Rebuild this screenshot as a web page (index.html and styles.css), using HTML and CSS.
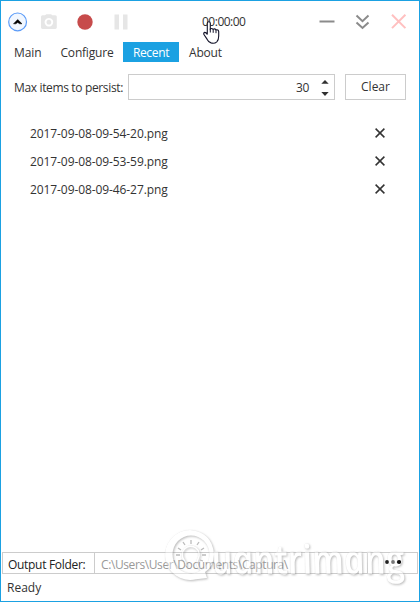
FILE: index.html
```html
<!DOCTYPE html>
<html lang="en">
<head>
<meta charset="utf-8">
<title>Captura</title>
<link rel="stylesheet" href="styles.css">
</head>
<body>
<div class="window">
  <header class="toolbar">
    <svg class="tools" width="140" height="40" viewBox="0 0 140 40">
      <circle cx="16.6" cy="19.9" r="8.9" fill="#f1f7ff" stroke="#5c9cf8" stroke-width="1.2"/>
      <path d="M12.5 21.8 16.7 17.5 21 21.8H18.7L16.7 20.5 14.8 21.8Z" fill="#000" stroke="#000" stroke-width=".5"/>
      <path fill="#e6e6e6" fill-rule="evenodd" d="M44 13.3 45.4 12.2H50L51.4 13.3H54.3Q55.8 13.3 55.8 14.8V25.6Q55.8 27 54.3 27H41.5Q40 27 40 25.6V14.8Q40 13.3 41.5 13.3ZM47.9 15.9a4.3 4.3 0 1 0 .01 0ZM47.9 17.8a2.4 2.4 0 1 1-.01 0Z"/>
      <circle cx="84" cy="20" r="7.7" fill="#c74b4b"/>
      <path d="M113.5 12.5h4.5v15h-4.5zM122 12.5h4.5v15H122z" fill="#e6e6e6"/>
    </svg>
    <span class="timer">00:00:00</span>
    <svg class="controls" width="100" height="40" viewBox="0 0 100 40" fill="none">
      <path d="M.5 19.5h15" stroke="#8b8b8b" stroke-width="2"/>
      <path d="M37.5 13.6 43.5 19.2 49.5 13.6M37.5 20.4 43.5 26 49.5 20.4" stroke="#8b8b8b" stroke-width="2"/>
      <path d="M73 12.7 86.4 26.1M86.4 12.7 73 26.1" stroke="#ffc0c0" stroke-width="2"/>
    </svg>
  </header>
  <nav class="tabs">
    <span class="tab main">Main</span>
    <span class="tab configure">Configure</span>
    <span class="tab recent">Recent</span>
    <span class="tab about">About</span>
  </nav>
  <section class="settings">
    <span class="label">Max items to persist:</span>
    <div class="number"><span>30</span>
      <svg width="8" height="18" viewBox="0 0 8 18"><path d="M.3 4.7 4 .9 7.7 4.7ZM.3 13.1H7.7L4 16.9Z" fill="#303030"/></svg>
    </div>
    <button class="clear">Clear</button>
  </section>
  <main class="list">
    <div class="item"><span>2017-09-08-09-54-20.png</span><svg width="10" height="10" viewBox="0 0 10 10"><path d="M.6.6 9.4 9.4M9.4.6.6 9.4"/></svg></div>
    <div class="item"><span>2017-09-08-09-53-59.png</span><svg width="10" height="10" viewBox="0 0 10 10"><path d="M.6.6 9.4 9.4M9.4.6.6 9.4"/></svg></div>
    <div class="item"><span>2017-09-08-09-46-27.png</span><svg width="10" height="10" viewBox="0 0 10 10"><path d="M.6.6 9.4 9.4M9.4.6.6 9.4"/></svg></div>
  </main>
  <div class="output">
    <span class="output-label">Output Folder:</span>
    <span class="path">C:\Users\User\Documents\Captura\</span>
    <span class="more"></span>
  </div>
  <footer class="status">Ready</footer>
</div>
<svg class="cursor" width="20" height="26" viewBox="0 0 20 26">
  <path d="M5.3 14.5V3.3Q5.3 1.7 6.8 1.7T8.3 3.3V9Q9.8 7.8 11.1 9.3 12.8 8.3 14 9.9 16.4 9.4 16.7 11.6V16Q16.7 20 14.8 21.8 12.5 23.8 9 22.9 6.6 22.2 5.2 19.4L1.8 14.3Q1.4 12.7 2.8 12.4 4.2 12.4 5.3 14.5Z" fill="#fff" stroke="#14142a" stroke-width="1.1"/>
  <path d="M8.3 8.5v4M11.2 9.3v3.5M14 9.9v3.3" fill="none" stroke="#14142a"/>
</svg>
<svg class="watermark" width="268" height="81" viewBox="0 0 268 81">
  <filter id="emboss" x="0" y="0" width="268" height="81" filterUnits="userSpaceOnUse" color-interpolation-filters="sRGB">
    <feGaussianBlur in="SourceAlpha" stdDeviation=".8"/>
    <feOffset dx="1.2" dy="1.2"/>
    <feComposite in2="SourceAlpha" operator="out" result="edge"/>
    <feFlood flood-color="#8c8c8c" flood-opacity=".6"/>
    <feComposite in2="edge" operator="in" result="dark"/>
    <feGaussianBlur in="SourceAlpha" stdDeviation=".6"/>
    <feOffset dx="-.3" dy="-.3"/>
    <feComposite in2="SourceAlpha" operator="out" result="rim"/>
    <feFlood flood-color="#999" flood-opacity=".25"/>
    <feComposite in2="rim" operator="in" result="light"/>
    <feComponentTransfer in="SourceGraphic" result="face"><feFuncA type="linear" slope=".4"/></feComponentTransfer>
    <feMerge><feMergeNode in="light"/><feMergeNode in="dark"/><feMergeNode in="face"/></feMerge>
  </filter>
  <g filter="url(#emboss)" fill="#fff">
    <path fill-rule="evenodd" d="M40 10A25 25 0 1 0 46 59.3L57 58 55 52Q64 46 64 34 62 12 40 10ZM41 15.5A18.5 19 0 1 1 41 53.5 18.5 19 0 1 1 41 15.5Z"/>
    <path d="M37 46 34 40A8.5 8.5 0 1 1 48 39Q45 44 50 49L55 54" fill="none" stroke="#fff" stroke-width="1.5"/>
    <text transform="translate(64 53.5) skewX(12)" textLength="193" lengthAdjust="spacingAndGlyphs">uantrimang</text>
  </g>
  <path d="M41 24v-4M35 25l-2-3M47 25l2-3M31 30l-3-2M51 30l3-2M30 35h-4M52 35h4M32 40l-3 1M50 40l3 1" stroke="#bbb" stroke-width="1.3"/>
</svg>
<svg class="dots" width="16" height="6" viewBox="0 0 16 6"><circle cx="2" cy="3" r="1.9" fill="#222"/><circle cx="8" cy="3" r="1.9" fill="#777"/><circle cx="14" cy="3" r="2.1" fill="#111"/></svg>
</body>
</html>
```

FILE: styles.css
```css
* { box-sizing: border-box; }
body { margin: 0; background: #fff; }
body, button { font: 12px/16px "Open Sans", "Noto Sans", sans-serif; color: #333; }
svg { display: block; flex: none; }
.window {
  width: 420px; height: 602px; border: 1px solid #1ba1e2;
  display: flex; flex-direction: column;
}
.toolbar { height: 41px; display: flex; align-items: center; flex: none; }
.timer { margin-left: 61px; width: 117px; letter-spacing: -.5px; }
.tabs { height: 20px; display: flex; line-height: 22px; flex: none; }
.tab { white-space: nowrap; }
.main { margin-left: 13px; width: 46px; letter-spacing: -.1px; }
.configure { width: 63px; letter-spacing: -.2px; padding-left: .5px; }
.recent { width: 56px; text-align: center; background: #1ba1e2; color: #fff; letter-spacing: -.35px; }
.about { margin-left: 10px; letter-spacing: -.2px; }
.settings { display: flex; height: 26px; margin: 12px 13px 0; align-items: center; flex: none; }
.label { width: 114px; white-space: nowrap; letter-spacing: -.35px; padding-top: 2px; }
.number {
  width: 207px; height: 26px; border: 1px solid #ccc;
  display: flex; align-items: center; justify-content: flex-end; gap: 12px; padding: 2px 5px 0 0;
}
.number span { letter-spacing: -.4px; }
.clear { width: 61px; height: 26px; margin-left: 10px; padding: 0; border: 1px solid #ccc; background: #fff; }
.list { padding: 19px 34px 0 29px; flex: 1; }
.item { height: 28px; display: flex; align-items: center; justify-content: space-between; letter-spacing: -.09px; }
.item span { padding-top: 2px; }
.item path { stroke: #333; stroke-width: 1.5; }
.output {
  height: 22px; margin: 0 1px; border: 1px solid #ccc; display: flex; flex: none; line-height: 23px;
}
.output-label { width: 92px; padding-left: 5px; border-right: 1px solid #ccc; color: #222; white-space: nowrap; letter-spacing: -.3px; }
.path { flex: 1; padding-left: 6px; color: #999; letter-spacing: -.4px; }
.more { width: 50px; border-left: 1px solid #ccc; }
.status { height: 27px; padding-left: 6px; line-height: 28px; flex: none; }
.cursor { position: absolute; left: 202px; top: 20px; }
.watermark { position: absolute; left: 150px; top: 520px; overflow: visible; }
.watermark text { font: italic 600 41px "Open Sans", sans-serif; }
.dots { position: absolute; left: 385px; top: 559px; }
```
